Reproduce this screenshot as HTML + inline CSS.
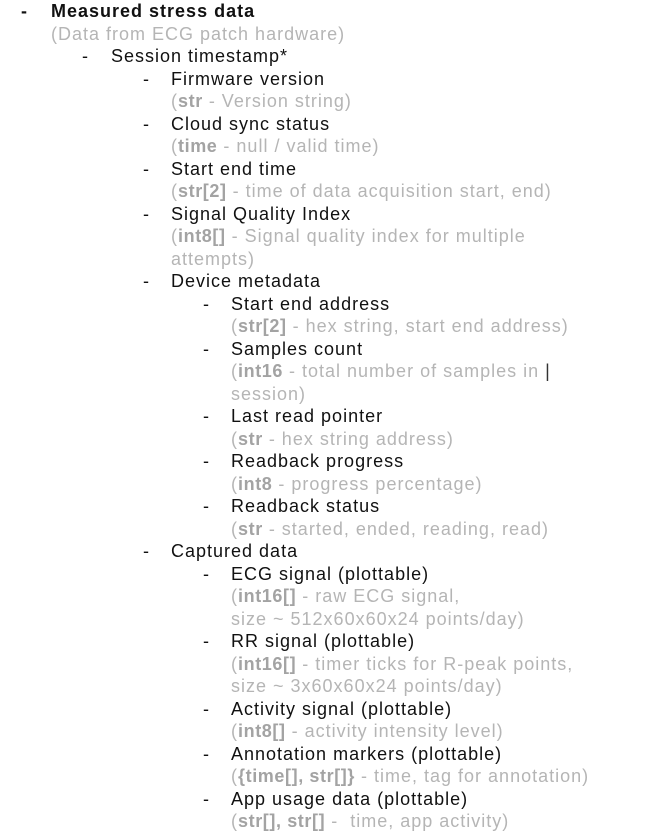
<!DOCTYPE html>
<html><head><meta charset="utf-8"><style>
html,body{margin:0;padding:0;background:#fff;width:668px;height:837px;overflow:hidden}
body{font-family:"Liberation Sans",sans-serif;font-size:18px;color:#111;letter-spacing:1px}
.l{height:22.5px;line-height:22.5px;white-space:nowrap;position:relative}
.g{color:#b5b5b5}
.g b{color:#a3a3a3;letter-spacing:0.6px}
.d{position:absolute}
.l0{padding-left:51px}.l0 .d{left:21px}
.l1{padding-left:111px}.l1 .d{left:82px}
.l2{padding-left:171px}.l2 .d{left:143px}
.l3{padding-left:231px}.l3 .d{left:203px}
</style></head><body>
<div class="l l0"><span class="d"><b>-</b></span><b style="letter-spacing:1px">Measured stress data</b></div>
<div class="l l0 g">(Data from ECG patch hardware)</div>
<div class="l l1"><span class="d">-</span>Session timestamp*</div>
<div class="l l2"><span class="d">-</span>Firmware version</div>
<div class="l l2 g">(<b>str</b> - Version string)</div>
<div class="l l2"><span class="d">-</span>Cloud sync status</div>
<div class="l l2 g">(<b>time</b> - null / valid time)</div>
<div class="l l2"><span class="d">-</span>Start end time</div>
<div class="l l2 g">(<b>str[2]</b> - time of data acquisition start, end)</div>
<div class="l l2"><span class="d">-</span>Signal Quality Index</div>
<div class="l l2 g">(<b>int8[]</b> - Signal quality index for multiple</div>
<div class="l l2 g">attempts)</div>
<div class="l l2"><span class="d">-</span>Device metadata</div>
<div class="l l3"><span class="d">-</span>Start end address</div>
<div class="l l3 g">(<b>str[2]</b> - hex string, start end address)</div>
<div class="l l3"><span class="d">-</span>Samples count</div>
<div class="l l3 g">(<b>int16</b> - total number of samples in <span style="color:#333">|</span></div>
<div class="l l3 g">session)</div>
<div class="l l3"><span class="d">-</span>Last read pointer</div>
<div class="l l3 g">(<b>str</b> - hex string address)</div>
<div class="l l3"><span class="d">-</span>Readback progress</div>
<div class="l l3 g">(<b>int8</b> - progress percentage)</div>
<div class="l l3"><span class="d">-</span>Readback status</div>
<div class="l l3 g">(<b>str</b> - started, ended, reading, read)</div>
<div class="l l2"><span class="d">-</span>Captured data</div>
<div class="l l3"><span class="d">-</span>ECG signal (plottable)</div>
<div class="l l3 g">(<b>int16[]</b> - raw ECG signal,</div>
<div class="l l3 g">size ~ 512x60x60x24 points/day)</div>
<div class="l l3"><span class="d">-</span>RR signal (plottable)</div>
<div class="l l3 g">(<b>int16[]</b> - timer ticks for R-peak points,</div>
<div class="l l3 g">size ~ 3x60x60x24 points/day)</div>
<div class="l l3"><span class="d">-</span>Activity signal (plottable)</div>
<div class="l l3 g">(<b>int8[]</b> - activity intensity level)</div>
<div class="l l3"><span class="d">-</span>Annotation markers (plottable)</div>
<div class="l l3 g">(<b>{time[], str[]}</b> - time, tag for annotation)</div>
<div class="l l3"><span class="d">-</span>App usage data (plottable)</div>
<div class="l l3 g">(<b>str[], str[]</b> -&nbsp; time, app activity)</div>
<div class="l l1"><span class="d">-</span></div>
</body></html>
